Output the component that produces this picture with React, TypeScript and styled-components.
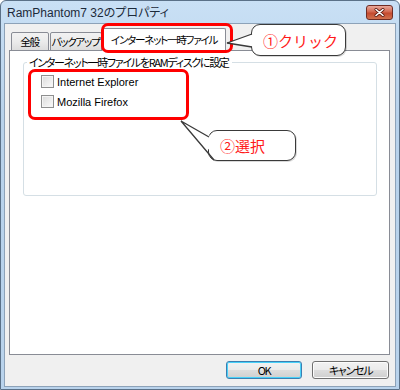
import React from "react";
import styled, { createGlobalStyle } from "styled-components";

const Global = createGlobalStyle`
  html, body { margin: 0; padding: 0; background: #fff; }
  body {
    font-family: "Noto Sans CJK JP", "Noto Sans", sans-serif;
    font-feature-settings: "palt" 1;
  }
`;

const Window = styled.div`
  position: relative;
  width: 400px;
  height: 390px;
  box-sizing: border-box;
  display: flex;
  flex-direction: column;
  background: linear-gradient(180deg, #c9e0f5 0%, #b8d2eb 30%, #b9d3ec 100%);
  border: 1px solid #5b7188;
  border-radius: 6px 6px 0 0;
`;

const TitleBar = styled.div`
  height: 21px;
  display: flex;
  align-items: center;
  justify-content: space-between;
  padding: 0 6px 0 6px;
  flex-shrink: 0;
`;

const Title = styled.span`
  font-family: "Liberation Sans", "Noto Sans CJK JP", sans-serif;
  font-size: 12px;
  color: #1c2a3a;
`;

const CloseButton = styled.div`
  width: 25px;
  height: 13px;
  margin-top: 1px;
  border-radius: 3px;
  border: 1px solid #6f2c24;
  background: linear-gradient(180deg, #e9a99b 0%, #d2674f 45%, #c44a2f 55%, #d0724f 100%);
  display: flex;
  align-items: center;
  justify-content: center;
`;

const Client = styled.div`
  flex: 1;
  margin: 1px 3px 2px 3px;
  background: #f0f0f0;
  border: 1px solid #8da2b8;
  display: flex;
  flex-direction: column;
  padding: 4px 5px 0 4px;
  font-size: 11px;
  letter-spacing: -1.3px;
`;

const TabRow = styled.div`
  display: flex;
  align-items: flex-end;
  height: 23px;
  padding-left: 2px;
  position: relative;
  z-index: 1;
  margin-bottom: -1px;
`;

const Tab = styled.div<{ $active?: boolean; $w: number }>`
  box-sizing: border-box;
  width: ${(p) => p.$w}px;
  height: ${(p) => (p.$active ? "23px" : "19px")};
  margin-left: ${(p) => (p.$active ? "-1px" : "0")};
  margin-right: ${(p) => (p.$active ? "-1px" : "1px")};
  padding-right: ${(p) => (p.$active ? "0" : "1px")};
  border: 1px solid #898c95;
  border-bottom: ${(p) => (p.$active ? "1px solid #fff" : "1px solid #898c95")};
  border-radius: 2px 2px 0 0;
  background: ${(p) => (p.$active ? "#fff" : "linear-gradient(180deg, #f2f2f2 0%, #ebebeb 50%, #dddddd 100%)")};
  color: #000;
  font-size: 10.6px;
  letter-spacing: -1.3px;
  display: flex;
  align-items: center;
  justify-content: center;
  white-space: nowrap;
  position: relative;
  z-index: ${(p) => (p.$active ? 2 : 1)};
`;

const Panel = styled.div`
  height: 305px;
  box-sizing: border-box;
  background: #fff;
  border: 1px solid #898c95;
  padding: 3px 12px 0 13px;
`;

const Group = styled.fieldset`
  margin: 0;
  height: 142px;
  box-sizing: border-box;
  border: 1px solid #d5dfe5;
  border-radius: 3px;
  padding: 5px 0 0 0;
`;

const Legend = styled.legend`
  color: #000;
  padding: 0 3px 0 2px;
  margin-left: 3px;
`;

const Options = styled.div`
  display: flex;
  flex-direction: column;
  gap: 7px;
  padding-left: 17px;
`;

const CheckRow = styled.label`
  display: flex;
  align-items: center;
  gap: 3px;
  font-family: "Liberation Sans", "Noto Sans", sans-serif;
  font-size: 11px;
  letter-spacing: 0;
  color: #000;
  height: 13px;
`;

const Box = styled.span`
  width: 11px;
  height: 11px;
  border: 1px solid #8e8f8f;
  background: linear-gradient(135deg, #d9dada 0%, #eeeeee 60%, #fafafa 100%);
  box-shadow: inset 0 0 0 1px #f4f4f4;
`;

const ButtonRow = styled.div`
  display: flex;
  justify-content: flex-end;
  gap: 10px;
  padding: 6px 1px 0 0;
`;

const Button = styled.div<{ $default?: boolean }>`
  box-sizing: border-box;
  width: ${(p) => (p.$default ? "76px" : "77px")};
  height: 18px;
  border: 1px solid ${(p) => (p.$default ? "#3c7fb1" : "#707070")};
  border-radius: 3px;
  background: linear-gradient(180deg, #f2f2f2 0%, #ebebeb 48%, #dddddd 52%, #cfcfcf 100%);
  box-shadow: inset 0 0 0 1px ${(p) => (p.$default ? "#48d1f9" : "#fcfcfc")};
  display: flex;
  align-items: center;
  justify-content: center;
  color: #000;
`;

const Highlight = styled.div<{ $l: number; $t: number; $w: number; $h: number }>`
  position: absolute;
  left: ${(p) => p.$l}px;
  top: ${(p) => p.$t}px;
  width: ${(p) => p.$w}px;
  height: ${(p) => p.$h}px;
  box-sizing: border-box;
  border: 3px solid #ff0000;
  border-radius: 7px;
  pointer-events: none;
  z-index: 5;
`;

const Callout = styled.div<{ $l: number; $t: number; $w: number; $h: number }>`
  position: absolute;
  left: ${(p) => p.$l}px;
  top: ${(p) => p.$t}px;
  width: ${(p) => p.$w}px;
  height: ${(p) => p.$h}px;
  box-sizing: border-box;
  border: 1.5px solid #3a3a3a;
  border-radius: 9px;
  background: #fff;
  display: flex;
  align-items: center;
  padding-left: 11px;
  font-size: 15px;
  font-feature-settings: normal;
  color: #ff1a1a;
  z-index: 6;
  box-shadow: 1px 1px 0 rgba(0,0,0,0.15);
`;

const Pointer = styled.svg`
  position: absolute;
  left: 0;
  top: 0;
  z-index: 7;
  pointer-events: none;
`;

export default function App() {
  return (
    <>
      <Global />
      <Window>
        <TitleBar>
          <Title>RamPhantom7 32のプロパティ</Title>
          <CloseButton>
            <svg width="11" height="9" viewBox="0 0 11 9">
              <path d="M2 1.5 L9 7.5 M9 1.5 L2 7.5" stroke="#5a1a10" strokeWidth="3" strokeLinecap="round" />
              <path d="M2 1.5 L9 7.5 M9 1.5 L2 7.5" stroke="#fff" strokeWidth="1.6" strokeLinecap="round" />
            </svg>
          </CloseButton>
        </TitleBar>
        <Client>
          <TabRow>
            <Tab $w={38}>全般</Tab>
            <Tab $w={52}>バックアップ</Tab>
            <Tab $active $w={124}>インターネット一時ファイル</Tab>
          </TabRow>
          <Panel>
            <Group>
              <Legend>インターネット一時ファイルをRAMディスクに設定</Legend>
              <Options>
                <CheckRow><Box />Internet Explorer</CheckRow>
                <CheckRow><Box />Mozilla Firefox</CheckRow>
              </Options>
            </Group>
          </Panel>
          <ButtonRow>
            <Button $default>OK</Button>
            <Button>キャンセル</Button>
          </ButtonRow>
        </Client>

        <Highlight $l={100} $t={22} $w={132} $h={30} />
        <Highlight $l={27} $t={68} $w={161} $h={51} />

        <Callout $l={250} $t={23} $w={95} $h={32}>①クリック</Callout>
        <Callout $l={207} $t={129} $w={88} $h={31}>②選択</Callout>

        <Pointer width="400" height="390" viewBox="0 0 400 390">
          <path d="M252 33 L226 42 L252 46 Z" fill="#fff" />
          <path d="M251 33 L226 42 L251 46" fill="none" stroke="#3a3a3a" strokeWidth="1.3" />
          <path d="M209 135 L180 120 L214 155 L209 150 Z" fill="#fff" />
          <path d="M208 136 L180 120 L213 159" fill="none" stroke="#3a3a3a" strokeWidth="1.3" />
        </Pointer>
      </Window>
    </>
  );
}
